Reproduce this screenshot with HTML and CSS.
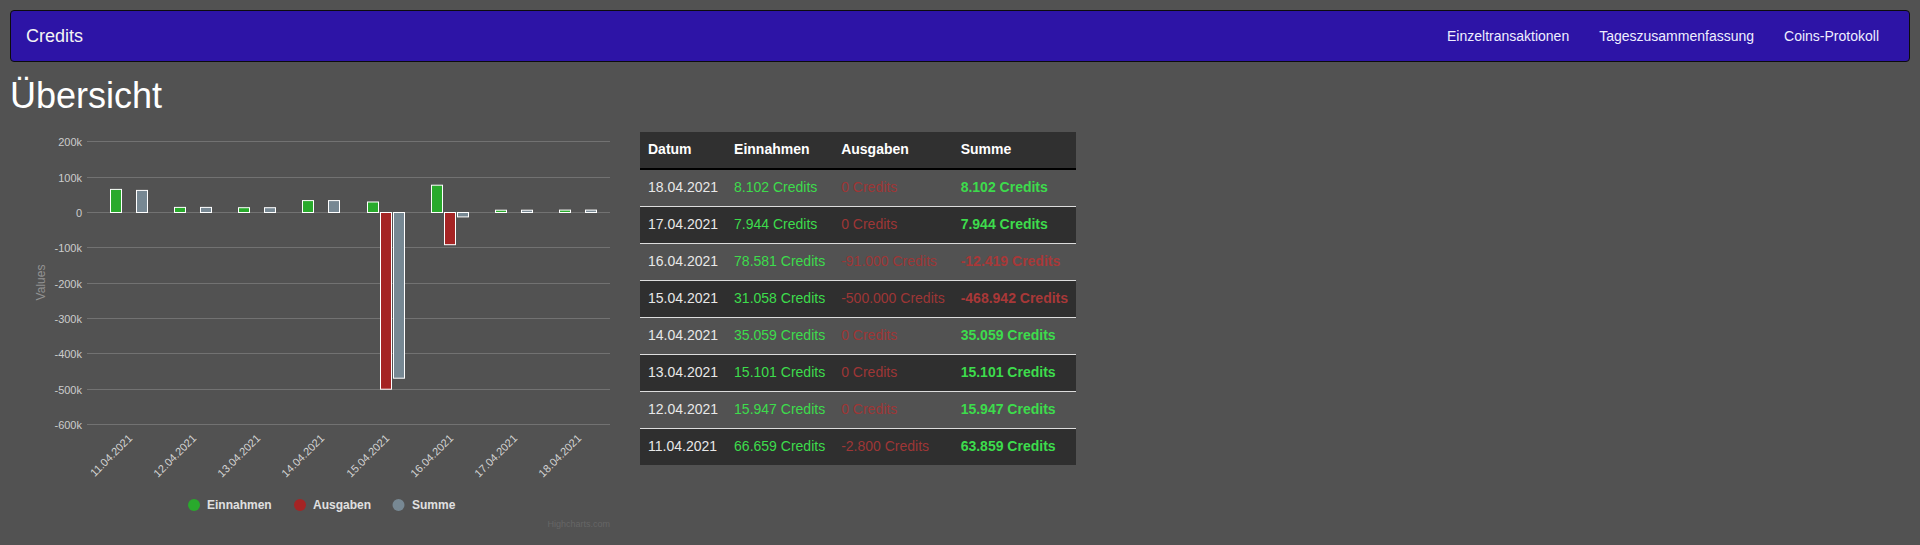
FILE: index.html
```html
<!DOCTYPE html>
<html lang="de">
<head>
<meta charset="utf-8">
<title>Credits – Übersicht</title>
<link rel="stylesheet" href="styles.css">
</head>
<body>
<nav class="navbar">
  <a class="brand" href="#">Credits</a>
  <ul class="nav">
    <li><a href="#">Einzeltransaktionen</a></li>
    <li><a href="#">Tageszusammenfassung</a></li>
    <li><a href="#">Coins-Protokoll</a></li>
  </ul>
</nav>

<h1 class="title">Übersicht</h1>

<div class="content">
  <svg class="chart" width="610" height="400" viewBox="0 0 610 400" xmlns="http://www.w3.org/2000/svg">
    <g class="grid">
      <line x1="77" x2="600" y1="9.5" y2="9.5"/>
      <line x1="77" x2="600" y1="45.5" y2="45.5"/>
      <line x1="77" x2="600" y1="80.5" y2="80.5"/>
      <line x1="77" x2="600" y1="115.5" y2="115.5"/>
      <line x1="77" x2="600" y1="151.5" y2="151.5"/>
      <line x1="77" x2="600" y1="186.5" y2="186.5"/>
      <line x1="77" x2="600" y1="221.5" y2="221.5"/>
      <line x1="77" x2="600" y1="257.5" y2="257.5"/>
      <line x1="77" x2="600" y1="292.5" y2="292.5"/>
    </g>
    <g class="ylabels">
      <text x="72" y="13.5">200k</text>
      <text x="72" y="49.5">100k</text>
      <text x="72" y="84.5">0</text>
      <text x="72" y="119.5">-100k</text>
      <text x="72" y="155.5">-200k</text>
      <text x="72" y="190.5">-300k</text>
      <text x="72" y="225.5">-400k</text>
      <text x="72" y="261.5">-500k</text>
      <text x="72" y="296.5">-600k</text>
    </g>
    <text class="ytitle" transform="translate(35 150.5) rotate(-90)">Values</text>

    <g class="bars in">
      <rect x="100.5" y="57.4" width="11" height="23.1"/>
      <rect x="164.5" y="75.4" width="11" height="5.1"/>
      <rect x="228.5" y="75.7" width="11" height="4.8"/>
      <rect x="292.5" y="68.6" width="11" height="11.9"/>
      <rect x="357.5" y="70.0" width="11" height="10.5"/>
      <rect x="421.5" y="53.2" width="11" height="27.3"/>
      <rect x="485.5" y="78.2" width="11" height="2.3"/>
      <rect x="549.5" y="78.1" width="11" height="2.4"/>
    </g>
    <g class="bars out">
      <rect x="370.5" y="80.5" width="11" height="176.7"/>
      <rect x="434.5" y="80.5" width="11" height="32.2"/>
    </g>
    <g class="bars sum">
      <rect x="126.5" y="58.4" width="11" height="22.1"/>
      <rect x="190.5" y="75.4" width="11" height="5.1"/>
      <rect x="254.5" y="75.7" width="11" height="4.8"/>
      <rect x="318.5" y="68.6" width="11" height="11.9"/>
      <rect x="383.5" y="80.5" width="11" height="165.7"/>
      <rect x="447.5" y="80.5" width="11" height="4.4"/>
      <rect x="511.5" y="78.2" width="11" height="2.3"/>
      <rect x="575.5" y="78.1" width="11" height="2.4"/>
    </g>

    <g class="xlabels">
      <text transform="translate(123 307) rotate(-45)">11.04.2021</text>
      <text transform="translate(187 307) rotate(-45)">12.04.2021</text>
      <text transform="translate(251 307) rotate(-45)">13.04.2021</text>
      <text transform="translate(315 307) rotate(-45)">14.04.2021</text>
      <text transform="translate(380 307) rotate(-45)">15.04.2021</text>
      <text transform="translate(444 307) rotate(-45)">16.04.2021</text>
      <text transform="translate(508 307) rotate(-45)">17.04.2021</text>
      <text transform="translate(572 307) rotate(-45)">18.04.2021</text>
    </g>

    <g class="legend">
      <circle class="dot-in" cx="184" cy="373" r="6"/>
      <text x="197" y="377">Einnahmen</text>
      <circle class="dot-out" cx="290" cy="373" r="6"/>
      <text x="303" y="377">Ausgaben</text>
      <circle class="dot-sum" cx="388.5" cy="373" r="6"/>
      <text x="402" y="377">Summe</text>
    </g>
    <text class="credits" x="600" y="395">Highcharts.com</text>
  </svg>

  <table class="summary">
    <thead>
      <tr><th>Datum</th><th>Einnahmen</th><th>Ausgaben</th><th>Summe</th></tr>
    </thead>
    <tbody>
      <tr><td>18.04.2021</td><td class="in">8.102 Credits</td><td class="out">0 Credits</td><td class="total pos">8.102 Credits</td></tr>
      <tr><td>17.04.2021</td><td class="in">7.944 Credits</td><td class="out">0 Credits</td><td class="total pos">7.944 Credits</td></tr>
      <tr><td>16.04.2021</td><td class="in">78.581 Credits</td><td class="out">-91.000 Credits</td><td class="total neg">-12.419 Credits</td></tr>
      <tr><td>15.04.2021</td><td class="in">31.058 Credits</td><td class="out">-500.000 Credits</td><td class="total neg">-468.942 Credits</td></tr>
      <tr><td>14.04.2021</td><td class="in">35.059 Credits</td><td class="out">0 Credits</td><td class="total pos">35.059 Credits</td></tr>
      <tr><td>13.04.2021</td><td class="in">15.101 Credits</td><td class="out">0 Credits</td><td class="total pos">15.101 Credits</td></tr>
      <tr><td>12.04.2021</td><td class="in">15.947 Credits</td><td class="out">0 Credits</td><td class="total pos">15.947 Credits</td></tr>
      <tr><td>11.04.2021</td><td class="in">66.659 Credits</td><td class="out">-2.800 Credits</td><td class="total pos">63.859 Credits</td></tr>
    </tbody>
  </table>
</div>
</body>
</html>
```

FILE: styles.css
```css
* {
  box-sizing: border-box;
}

html, body {
  height: 100%;
}

body {
  margin: 0;
  padding: 10px;
  background: #525252;
  font-family: "Liberation Sans", Arial, Helvetica, sans-serif;
  font-size: 14px;
  line-height: 20px;
  color: #eeeeee;
}

/* Navbar */
.navbar {
  display: flex;
  justify-content: space-between;
  align-items: center;
  height: 52px;
  background: #2d14a6;
  border: 1px solid #0c0c0c;
  border-radius: 4px;
}

.brand {
  display: block;
  padding: 15px;
  font-size: 18px;
  line-height: 20px;
  color: #f4f4f4;
  text-decoration: none;
}

.nav {
  display: flex;
  list-style: none;
  margin: 0;
  padding: 0 15px 0 0;
}

.nav a {
  display: block;
  padding: 15px;
  line-height: 20px;
  color: #eeeeff;
  text-decoration: none;
}

/* Heading */
.title {
  margin: 14px 0 16px;
  font-size: 36px;
  font-weight: 400;
  line-height: 1.1;
  color: #ffffff;
}

/* Content */
.content {
  display: flex;
  align-items: flex-start;
  gap: 20px;
}

.chart {
  display: block;
  flex: none;
  font-family: "Liberation Sans", Arial, Helvetica, sans-serif;
}

.grid line {
  stroke: #727272;
  stroke-width: 1;
}

.ylabels text {
  font-size: 11px;
  fill: #cccccc;
  text-anchor: end;
}

.ytitle {
  font-size: 12px;
  fill: #939393;
  text-anchor: middle;
}

.bars rect {
  stroke: #ffffff;
  stroke-width: 1;
}

.bars.in rect { fill: #29aa2c; }
.bars.out rect { fill: #a52424; }
.bars.sum rect { fill: #778893; }

.xlabels text {
  font-size: 11px;
  fill: #d4d4d4;
  text-anchor: end;
}

.legend text {
  font-size: 12px;
  font-weight: 700;
  fill: #e0e0e0;
}

.dot-in { fill: #29aa2c; }
.dot-out { fill: #a52424; }
.dot-sum { fill: #778893; }

.credits {
  font-size: 9px;
  fill: #666666;
  text-anchor: end;
}

/* Table */
.summary {
  border-collapse: collapse;
  flex: none;
}

.summary th,
.summary td {
  padding: 7px 8px 9px;
  line-height: 20px;
  text-align: left;
  white-space: nowrap;
  vertical-align: top;
}

.summary thead th {
  background: #303030;
  color: #ffffff;
  font-weight: 700;
  border-bottom: 2px solid #000000;
}

.summary tbody td {
  border-top: 1px solid #dddddd;
  color: #e8e8e8;
}

.summary tbody tr:first-child td {
  border-top: 0;
}

.summary tbody tr:nth-child(even) {
  background: #2f2f2f;
}

.summary td.in {
  color: #3ddc4c;
}

.summary td.out {
  color: #9e3636;
}

.summary td.total {
  font-weight: 700;
}

.summary td.total.pos {
  color: #3ddc4c;
}

.summary td.total.neg {
  color: #a83838;
}
```
